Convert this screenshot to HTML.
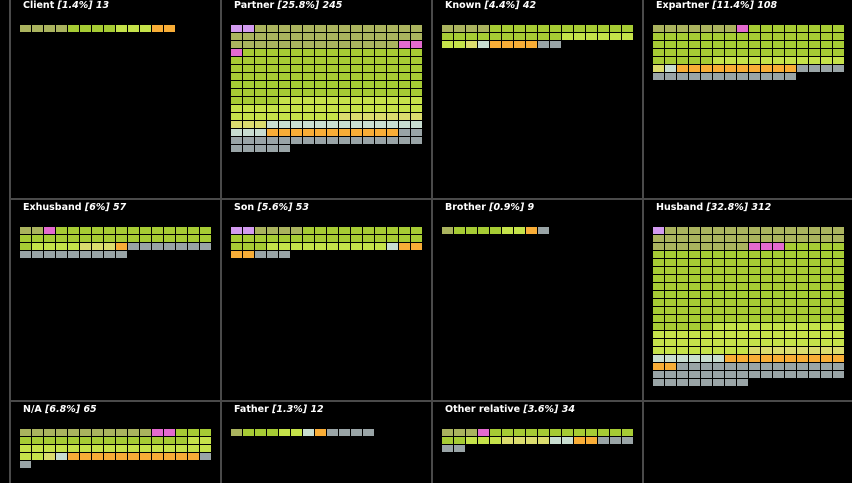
<!DOCTYPE html>
<html><head><meta charset="utf-8"><style>
html,body{margin:0;padding:0;background:#000;width:852px;height:483px;overflow:hidden;position:relative;font-family:"DejaVu Sans","Liberation Sans",sans-serif}
.vl{position:absolute;width:2px;background:#4a4a4a}
.hl{position:absolute;height:2px;background:#4a4a4a}
.t{position:absolute;color:#fff;font-size:9.5px;font-weight:bold;white-space:nowrap;line-height:11px}
.t i{font-weight:bold}
.c{position:absolute;width:11px;height:7px}
</style></head><body>
<div class="vl" style="left:9px;top:0;height:483px"></div>
<div class="vl" style="left:220px;top:0;height:483px"></div>
<div class="vl" style="left:431px;top:0;height:483px"></div>
<div class="vl" style="left:642px;top:0;height:483px"></div>
<div class="hl" style="left:9px;top:198px;width:843px"></div>
<div class="hl" style="left:9px;top:400px;width:843px"></div>
<div id="root"></div>
<script>
var cols=["#d39bf0","#aab35e","#e36acf","#a6cb34","#c5e24a","#dbdc6e","#c8ddd0","#f8ad37","#99a4a6"];
var P=[
["Client","1.4%","13",20,0,[0,4,0,4,3,0,0,2,0]],
["Partner","25.8%","245",231,0,[2,44,3,99,37,10,16,11,23]],
["Known","4.4%","42",442,0,[0,4,0,22,8,1,1,4,2]],
["Expartner","11.4%","108",653,0,[0,7,1,61,11,1,1,10,16]],
["Exhusband","6%","57",20,202,[0,2,1,30,4,3,0,1,16]],
["Son","5.6%","53",231,202,[2,4,0,29,10,0,1,4,3]],
["Brother","0.9%","9",442,202,[0,1,0,4,2,0,0,1,1]],
["Husband","32.8%","312",653,202,[1,39,3,154,51,8,6,12,38]],
["N/A","6.8%","65",20,404,[0,11,2,17,20,1,1,11,2]],
["Father","1.3%","12",231,404,[0,1,0,3,2,0,1,1,4]],
["Other relative","3.6%","34",442,404,[0,3,1,14,3,4,2,2,5]]
];
var h="";
P.forEach(function(p){
 h+='<div class="t" style="left:'+(p[3]+3)+'px;top:'+p[4]+'px">'+p[0]+' <i>['+p[1]+']</i> <i>'+p[2]+'</i></div>';
 var k=0;
 p[5].forEach(function(n,ci){for(var j=0;j<n;j++){var x=p[3]+(k%16)*12,y=p[4]+25+Math.floor(k/16)*8;
  h+='<div class="c" style="left:'+x+'px;top:'+y+'px;background:'+cols[ci]+'"></div>';k++;}});
});
document.getElementById("root").innerHTML=h;
</script>
</body></html>
